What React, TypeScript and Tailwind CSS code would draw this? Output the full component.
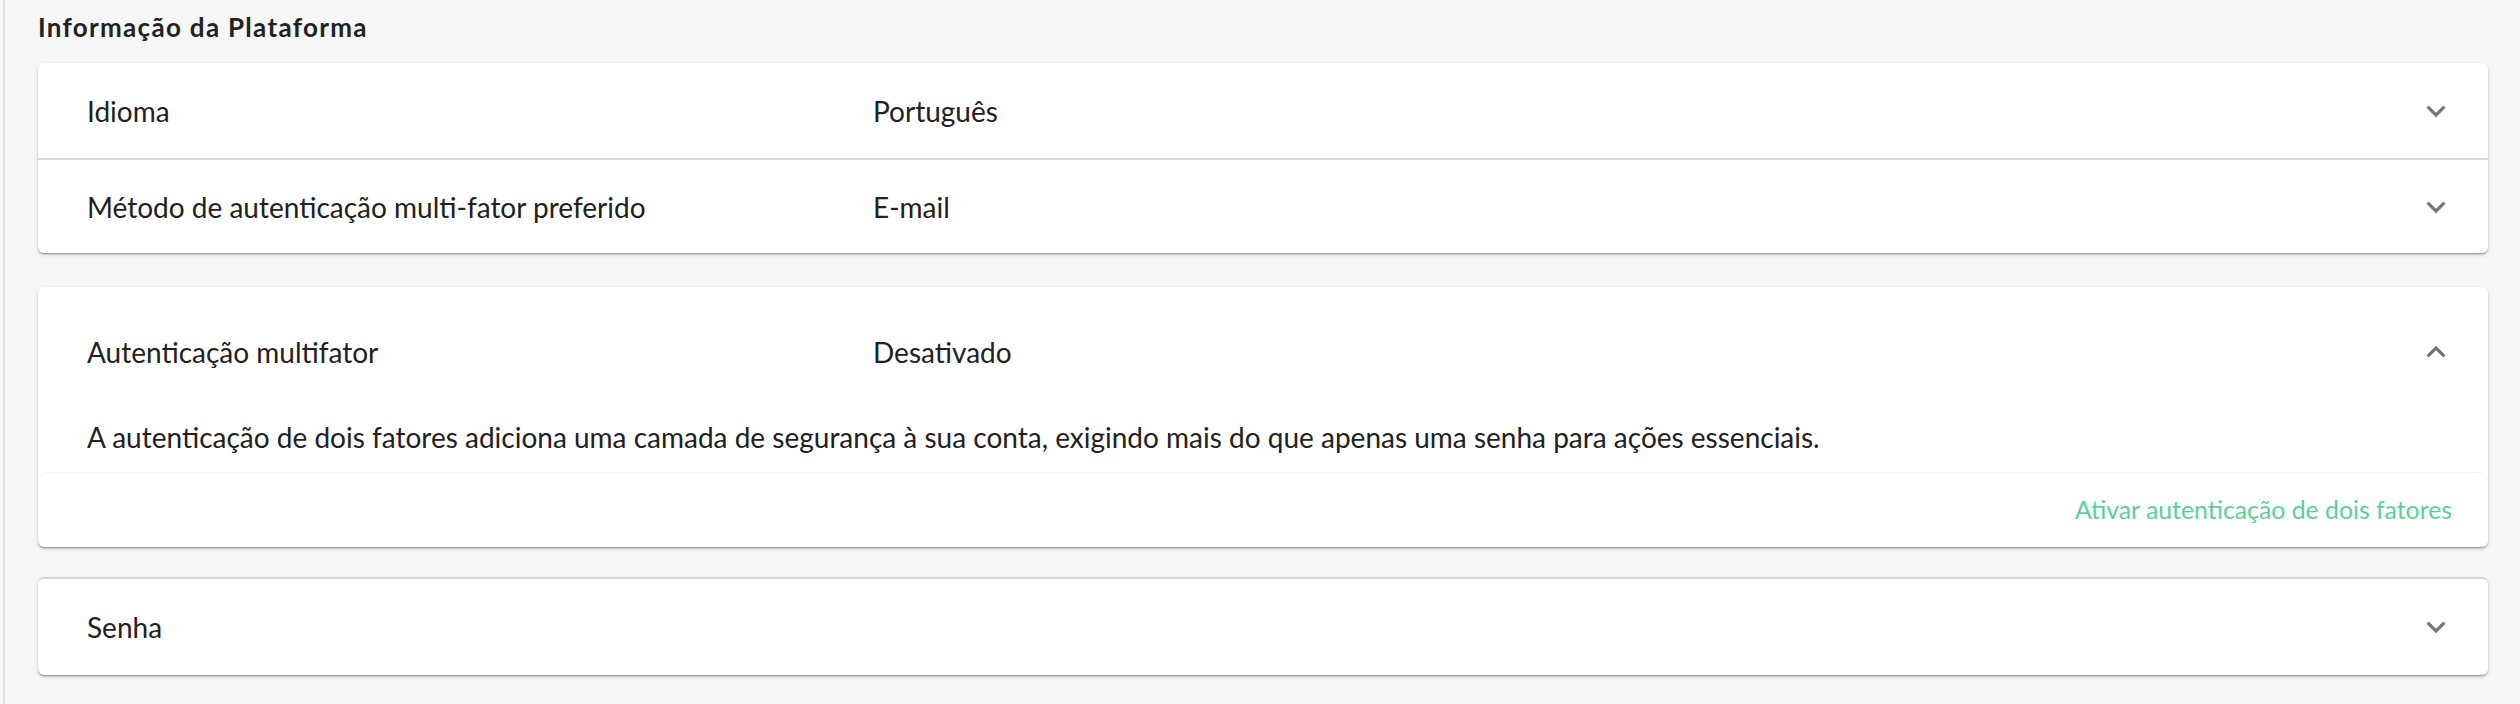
import { useState } from "react";

type Row = { label: string; value?: string };

const font = { fontFamily: "Lato, 'Noto Sans', sans-serif" };

function Chevron({ up }: { up?: boolean }) {
  return (
    <svg viewBox="0 0 24 24" className="w-[38px] h-[38px] fill-[#757575] shrink-0">
      {up ? (
        <path d="m12 8-6 6 1.41 1.41L12 10.83l4.59 4.58L18 14z" />
      ) : (
        <path d="M16.59 8.59 12 13.17 7.41 8.59 6 10l6 6 6-6z" />
      )}
    </svg>
  );
}

function SummaryRow({ label, value, up, className }: Row & { up?: boolean; className?: string }) {
  return (
    <div className={`flex items-center pl-[49px] pr-[33px] ${className ?? ""}`}>
      <div className="w-[786px] shrink-0 text-[28px] text-[#212121]">{label}</div>
      <div className="flex-1 text-[28px] text-[#212121]">{value}</div>
      <Chevron up={up} />
    </div>
  );
}

export default function App() {
  const [mfaOpen] = useState(true);

  // linhas do primeiro bloco (idioma + metodo mfa)
  const topRows: Row[] = [
    { label: "Idioma", value: "Português" },
    { label: "Método de autenticação multi-fator preferido", value: "E-mail" },
  ];

  const card =
    "bg-white shadow-[0_2px_2px_-1px_rgba(0,0,0,0.3),0_1px_2px_0_rgba(0,0,0,0.14),0_2px_5px_0_rgba(0,0,0,0.1)]";

  return (
    <div className="w-full h-[704px] bg-[#f7f7f7] pl-[3px]" style={font}>
      <div className="h-full border-l-2 border-[#e2e2e2] pl-[33px] pr-[32px]">
        <h2 className="pt-[7px] leading-[40px] text-[26px] tracking-[1.3px] font-bold text-[#222]">
          Informação da Plataforma
        </h2>

        {/* bloco 1 */}
        <div className={`mt-[16px] rounded-[6px] ${card}`}>
          {topRows.map((row, i) => (
            <SummaryRow
              key={row.label}
              {...row}
              className={i > 0 ? "h-[95px] border-t-2 border-[#dadada]" : "h-[95px]"}
            />
          ))}
        </div>

        {/* autenticacao multifator - aberto */}
        <div className={`mt-[34px] rounded-[6px] ${card}`}>
          <SummaryRow label="Autenticação multifator" value="Desativado" up={mfaOpen} className="h-[130px]" />
          {mfaOpen && (
            <>
              <p className="h-[55px] pl-[49px] leading-[40px] text-[28px] text-[#212121]">
                A autenticação de dois fatores adiciona uma camada de segurança à sua conta, exigindo mais do que
                apenas uma senha para ações essenciais.
              </p>
              <div className="h-[75px] flex items-center justify-end pr-[36px] rounded-[10px] border-t border-[#f3f3f3]">
                <button className="text-[24.8px] text-[#5ccf98]">Ativar autenticação de dois fatores</button>
              </div>
            </>
          )}
        </div>

        {/* senha */}
        <div className={`mt-[30px] rounded-[6px] border-t-2 border-[#d6d6d6] ${card}`}>
          <SummaryRow label="Senha" className="h-[96px]" />
        </div>
      </div>
    </div>
  );
}
